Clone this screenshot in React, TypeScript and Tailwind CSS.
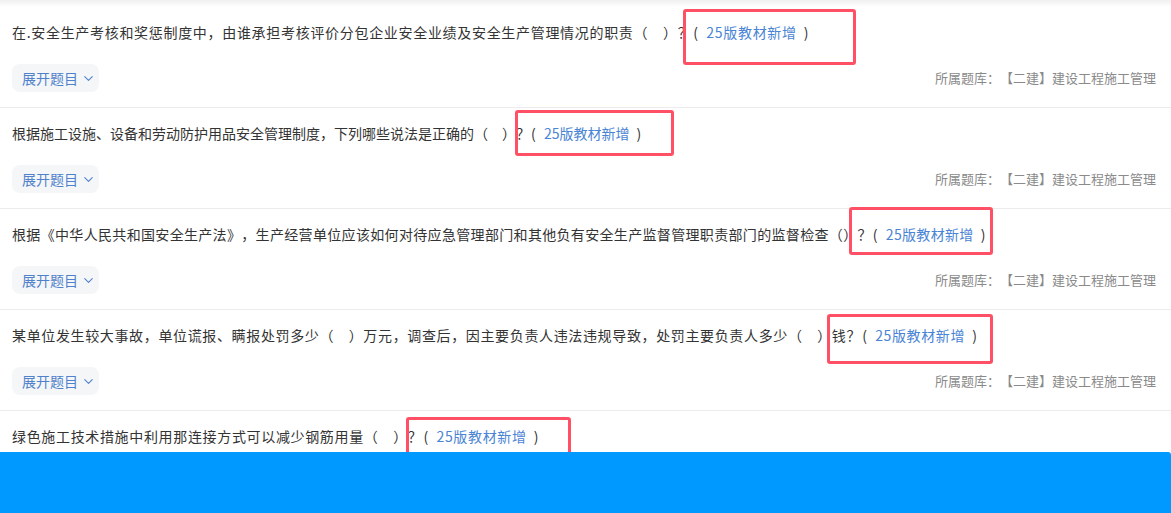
import React from "react";
import { ChevronDown } from "lucide-react";

type Q = { pre: string; track: string };

const questions: Q[] = [
  {
    pre: "在.安全生产考核和奖惩制度中，由谁承担考核评价分包企业安全业绩及安全生产管理情况的职责（　）？",
    track: "tracking-[0.69px]",
  },
  {
    pre: "根据施工设施、设备和劳动防护用品安全管理制度，下列哪些说法是正确的（　）？",
    track: "tracking-[0px]",
  },
  {
    pre: "根据《中华人民共和国安全生产法》，生产经营单位应该如何对待应急管理部门和其他负有安全生产监督管理职责部门的监督检查（）？",
    track: "tracking-[0.33px]",
  },
  {
    pre: "某单位发生较大事故，单位谎报、瞒报处罚多少（　）万元，调查后，因主要负责人违法违规导致，处罚主要负责人多少（　）钱？",
    track: "tracking-[0.64px]",
  },
  {
    pre: "绿色施工技术措施中利用那连接方式可以减少钢筋用量（　）？",
    track: "tracking-[0.66px]",
  },
];

function Row({ q }: { q: Q }) {
  return (
    <div className="border-b border-[#ececec] pl-3 pr-[15px] pt-[13px] pb-[15px]">
      <div
        className={`text-[14px] leading-[24px] text-[#333] whitespace-nowrap [text-spacing-trim:space-all] ${q.track}`}
      >
        {q.pre}
        <span className="inline-block w-[14px] pl-[1px]">(</span>
        <span className="text-[#4a84d4]">25版教材新增</span>
        <span className="inline-block w-[14px] pl-[7px]">)</span>
      </div>
      <div className="mt-5 flex items-center justify-between">
        <button className="flex h-7 w-[87px] items-center gap-[3px] rounded-lg bg-[#f5f6f8] pl-[10px] text-[14px] text-[#5082cc]">
          <span>展开题目</span>
          <ChevronDown size={15} strokeWidth={1.75} />
        </button>
        <div className="text-[13px] text-[#8a8a8a] [text-spacing-trim:space-all]">
          所属题库：【二建】建设工程施工管理
        </div>
      </div>
    </div>
  );
}

const boxes = [
  { l: 683, t: 9, w: 173, h: 56 },
  { l: 515, t: 110, w: 159, h: 46 },
  { l: 849, t: 207, w: 144, h: 48 },
  { l: 827, t: 314, w: 166, h: 50 },
  { l: 406, t: 417, w: 165, h: 60 },
];

export default function App() {
  return (
    <div
      className="relative h-[513px] w-full overflow-hidden bg-white"
      style={{ fontFamily: '"Noto Sans CJK SC", "Noto Sans", sans-serif' }}
    >
      <div className="h-[7px] bg-gradient-to-b from-[#f0f0f0] to-white" />
      {questions.map((q, i) => (
        <Row key={i} q={q} />
      ))}
      {boxes.map((b, i) => (
        <div
          key={i}
          className="pointer-events-none absolute rounded-[3px] border-[3px] border-[#ff5066]"
          style={{ left: b.l, top: b.t, width: b.w, height: b.h }}
        />
      ))}
      <div className="absolute bottom-0 left-0 right-0 h-[61px] rounded-tr-[3px] bg-[#0099ff]" />
    </div>
  );
}
